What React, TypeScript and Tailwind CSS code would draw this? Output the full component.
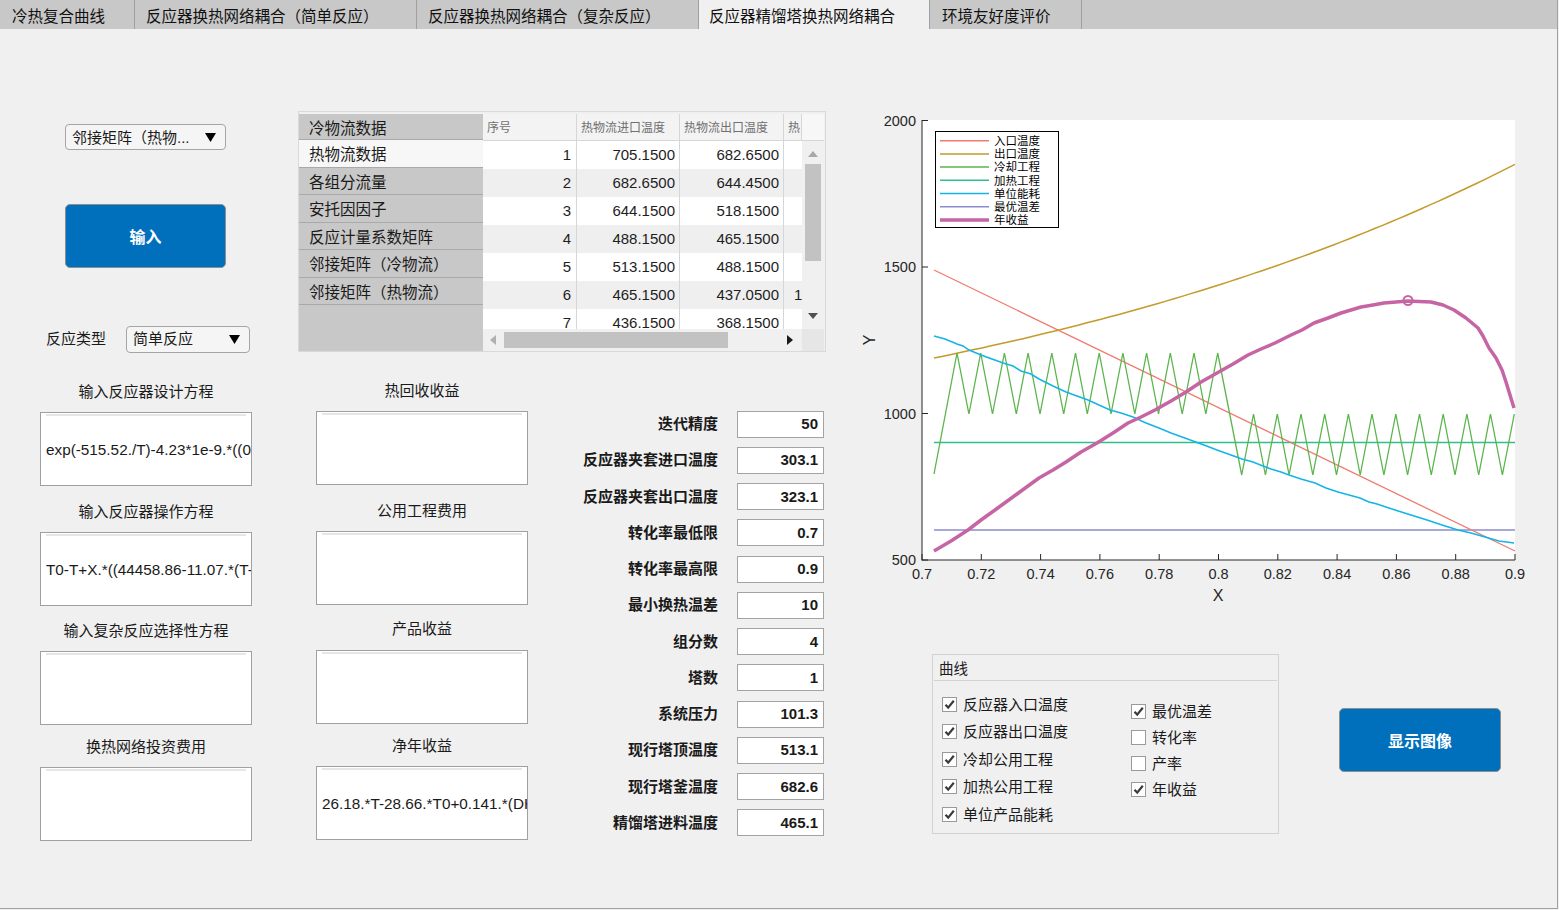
import React from "react";

type Pt = [number, number];
const toPath = (pts: Pt[]) =>
  pts.map((p, i) => `${i ? "L" : "M"}${p[0].toFixed(1)} ${p[1].toFixed(1)}`).join(" ");

function TriDown({ color = "#000" }: { color?: string }) {
  return (
    <svg width="11" height="9" viewBox="0 0 11 9">
      <path d="M0 0 L11 0 L5.5 9 Z" fill={color} />
    </svg>
  );
}

function SmallTri({ dir, color }: { dir: "up" | "down" | "left" | "right"; color: string }) {
  const d =
    dir === "up"
      ? "M0 6 L10 6 L5 0 Z"
      : dir === "down"
      ? "M0 0 L10 0 L5 6 Z"
      : dir === "left"
      ? "M6 0 L6 10 L0 5 Z"
      : "M0 0 L0 10 L6 5 Z";
  const vertical = dir === "up" || dir === "down";
  return (
    <svg width={vertical ? 10 : 6} height={vertical ? 6 : 10} viewBox={vertical ? "0 0 10 6" : "0 0 6 10"}>
      <path d={d} fill={color} />
    </svg>
  );
}

const tabs = [
  { label: "冷热复合曲线", cls: "w-[135px] pl-[12px]" },
  { label: "反应器换热网络耦合（简单反应）", cls: "w-[282px] pl-[11px]" },
  { label: "反应器换热网络耦合（复杂反应）", cls: "w-[282px] pl-[11px]" },
  { label: "反应器精馏塔换热网络耦合", cls: "w-[231px] pl-[10px] bg-[#f0f0f0]" },
  { label: "环境友好度评价", cls: "w-[152px] pl-[12px]" },
];

function Tabs() {
  return (
    <div className="h-[29px] bg-[#c8c8c8] flex shrink-0">
      {tabs.map((t) => (
        <div
          key={t.label}
          className={`h-full border-r border-[#a0a0a0] flex items-center pt-[4px] text-[15.5px] leading-[20px] text-[#111] whitespace-nowrap ${t.cls}`}
        >
          {t.label}
        </div>
      ))}
    </div>
  );
}

function TextBox({ text, cls }: { text?: string; cls: string }) {
  return (
    <div className={`h-[74px] w-[212px] bg-white border border-[#a0a0a0] flex flex-col ${cls}`}>
      <div className="mx-[5px] mt-[1px] h-[2px] bg-[#e6e6e6]" />
      <div className="flex-1 flex items-center pl-[5px] pr-[2px] overflow-hidden whitespace-nowrap text-[15.3px] leading-[20px] text-[#1a1a1a]">
        {text}
      </div>
    </div>
  );
}

function Label({ text, cls }: { text: string; cls: string }) {
  return (
    <div className={`w-[212px] h-[20px] text-center text-[15px] leading-[20px] text-[#1a1a1a] whitespace-nowrap ${cls}`}>
      {text}
    </div>
  );
}

function BlueButton({ text, cls }: { text: string; cls: string }) {
  return (
    <div
      className={`h-[64px] rounded-[5px] border border-[#8e8e8e] bg-[#0070bd] flex items-center justify-center pt-[3px] text-white font-bold text-[16px] leading-[20px] ${cls}`}
    >
      {text}
    </div>
  );
}

function ColumnA() {
  return (
    <div className="ml-[40px] w-[213px] flex flex-col">
      <div className="ml-[25px] mt-[95px] w-[161px] h-[26px] rounded-[4px] border border-[#a5a5a5] bg-[#f5f5f5] flex items-center justify-between pl-[6px] pr-[9px]">
        <span className="text-[15px] leading-[20px] text-[#1a1a1a] whitespace-nowrap pt-[1px]">邻接矩阵（热物...</span>
        <TriDown />
      </div>
      <BlueButton text="输入" cls="ml-[25px] mt-[54px] w-[161px]" />
      <div className="mt-[57.5px] h-[27px] flex items-center">
        <span className="ml-[6px] w-[80px] text-[15px] leading-[20px]">反应类型</span>
        <div className="w-[124px] h-[27px] rounded-[4px] border border-[#a5a5a5] bg-[#f5f5f5] flex items-center justify-between pl-[6px] pr-[9px]">
          <span className="text-[15px] leading-[20px] text-[#1a1a1a]">简单反应</span>
          <TriDown />
        </div>
      </div>
      <Label text="输入反应器设计方程" cls="mt-[29px]" />
      <TextBox text="exp(-515.52./T)-4.23*1e-9.*((0.66*T.^2-8.76*T" cls="mt-[10px]" />
      <Label text="输入反应器操作方程" cls="mt-[16px]" />
      <TextBox text="T0-T+X.*((44458.86-11.07.*(T-298.15)" cls="mt-[10px]" />
      <Label text="输入复杂反应选择性方程" cls="mt-[15px]" />
      <TextBox cls="mt-[10px]" />
      <Label text="换热网络投资费用" cls="mt-[12px]" />
      <TextBox cls="mt-[10px]" />
    </div>
  );
}

const listItems = ["冷物流数据", "热物流数据", "各组分流量", "安托因因子", "反应计量系数矩阵", "邻接矩阵（冷物流）", "邻接矩阵（热物流）"];

const rows: string[][] = [
  ["1", "705.1500", "682.6500", ""],
  ["2", "682.6500", "644.4500", ""],
  ["3", "644.1500", "518.1500", ""],
  ["4", "488.1500", "465.1500", ""],
  ["5", "513.1500", "488.1500", ""],
  ["6", "465.1500", "437.0500", "1"],
  ["7", "436.1500", "368.1500", ""],
];

function DataTable() {
  return (
    <div className="mt-[82px] w-[528px] h-[241px] border border-[#d9d9d9] pt-[2px] flex">
      <div className="w-[184px] h-full bg-[#c8c8c8] flex flex-col">
        {listItems.map((t, i) => (
          <div
            key={t}
            className={`${i === 0 ? "h-[26px]" : "h-[27.5px]"} ${i === 1 ? "bg-[#f7f7f7]" : ""} border-b border-[#a9a9a9] pl-[10px] pt-[4px] flex items-center text-[15.5px] leading-[20px] text-[#1a1a1a] whitespace-nowrap`}
          >
            {t}
          </div>
        ))}
      </div>
      <div className="w-[341px] h-full flex flex-col bg-white">
        <div className="h-[27px] flex bg-[#f3f3f3] border-b border-[#d6d6d6] text-[12px] leading-[16px] text-[#707070]">
          <div className="w-[94px] border-r border-[#d6d6d6] pl-[4px] pt-[2px] flex items-center">序号</div>
          <div className="w-[103px] border-r border-[#d6d6d6] pl-[4px] pt-[2px] flex items-center whitespace-nowrap">热物流进口温度</div>
          <div className="w-[104px] border-r border-[#d6d6d6] pl-[4px] pt-[2px] flex items-center whitespace-nowrap">热物流出口温度</div>
          <div className="w-[18px] border-r border-[#d6d6d6] pl-[4px] pt-[2px] flex items-center overflow-hidden whitespace-nowrap">热</div>
          <div className="w-[22px] bg-[#f7f7f7]" />
        </div>
        <div className="h-[188px] flex">
          <div className="w-[319px] h-full overflow-hidden flex flex-col">
            {rows.map((r, i) => (
              <div
                key={r[0]}
                className={`h-[28px] shrink-0 flex text-[15px] leading-[20px] text-[#1e1e1e] ${i % 2 === 1 ? "bg-[#efefef]" : "bg-white"}`}
              >
                <div className="w-[94px] border-r border-[#d6d6d6] pr-[5px] flex items-center justify-end">{r[0]}</div>
                <div className="w-[103px] border-r border-[#d6d6d6] pr-[4px] flex items-center justify-end">{r[1]}</div>
                <div className="w-[104px] border-r border-[#d6d6d6] pr-[4px] flex items-center justify-end">{r[2]}</div>
                <div className="w-[18px] pl-[10px] flex items-center overflow-hidden">{r[3]}</div>
              </div>
            ))}
          </div>
          <div className="w-[22px] h-full bg-[#f0f0f0] flex flex-col items-center">
            <div className="mt-[10px]">
              <SmallTri dir="up" color="#a8a8a8" />
            </div>
            <div className="mt-[7px] w-[16px] h-[97px] bg-[#c2c2c2]" />
            <div className="mt-auto mb-[10px]">
              <SmallTri dir="down" color="#505050" />
            </div>
          </div>
        </div>
        <div className="h-[22px] flex">
          <div className="w-[319px] h-full bg-[#f0f0f0] flex items-center">
            <div className="ml-[7px]">
              <SmallTri dir="left" color="#b0b0b0" />
            </div>
            <div className="ml-[8px] w-[224px] h-[16px] bg-[#c2c2c2]" />
            <div className="ml-auto mr-[9px]">
              <SmallTri dir="right" color="#1a1a1a" />
            </div>
          </div>
          <div className="w-[22px] h-full bg-[#e6e6e6]" />
        </div>
      </div>
    </div>
  );
}

const params: string[][] = [
  ["迭代精度", "50"],
  ["反应器夹套进口温度", "303.1"],
  ["反应器夹套出口温度", "323.1"],
  ["转化率最低限", "0.7"],
  ["转化率最高限", "0.9"],
  ["最小换热温差", "10"],
  ["组分数", "4"],
  ["塔数", "1"],
  ["系统压力", "101.3"],
  ["现行塔顶温度", "513.1"],
  ["现行塔釜温度", "682.6"],
  ["精馏塔进料温度", "465.1"],
];

function ColumnB() {
  return (
    <div className="ml-[45px] w-[528px] flex flex-col">
      <DataTable />
      <div className="flex">
        <div className="ml-[18px] w-[213px] flex flex-col">
          <Label text="热回收收益" cls="mt-[28.7px]" />
          <TextBox cls="mt-[10px]" />
          <Label text="公用工程费用" cls="mt-[16px]" />
          <TextBox cls="mt-[10px]" />
          <Label text="产品收益" cls="mt-[14px]" />
          <TextBox cls="mt-[11px]" />
          <Label text="净年收益" cls="mt-[12.3px]" />
          <TextBox text="26.18.*T-28.66.*T0+0.141.*(DH-14.3)" cls="mt-[9.7px]" />
        </div>
        <div className="ml-auto mr-[2px] mt-[58.7px] flex flex-col gap-[9.25px]">
          {params.map((p) => (
            <div key={p[0]} className="h-[27px] flex items-center justify-end">
              <span className="text-[15px] leading-[20px] font-bold text-[#1a1a1a] whitespace-nowrap">{p[0]}</span>
              <div className="ml-[19px] w-[87px] h-[27px] bg-white border border-[#a3a3a3] flex items-center justify-end pr-[5px] text-[15px] leading-[20px] font-bold text-[#1a1a1a]">
                {p[1]}
              </div>
            </div>
          ))}
        </div>
      </div>
    </div>
  );
}

function Chart() {
  const X0 = 921;
  const X1 = 1514;
  const gold: Pt[] = [];
  for (let x = 933; x < 1514; x += 8) gold.push([x, 358 - 127.5 * (Math.exp(0.00159 * (x - 933)) - 1)]);
  gold.push([1514, 358 - 127.5 * (Math.exp(0.00159 * (1514 - 933)) - 1)]);

  const green: Pt[] = [
    [933, 474],
    [956, 353],
  ];
  const h = 11.85;
  for (let k = 1; k <= 22; k++) green.push([956 + k * h, k % 2 === 1 ? 414 : 353]);
  green.push([1240.7, 475]);
  for (let k = 1; k <= 23; k++) green.push([1240.7 + k * h, k % 2 === 1 ? 414 : 475]);

  const cyan: Pt[] = [
    [933, 336], [944, 339], [956, 344], [962, 346], [968, 350], [980, 355], [991, 359], [1002, 363], [1012, 366],
    [1020, 371], [1030, 374], [1038, 379], [1052, 386], [1065, 392], [1076, 396], [1087, 400], [1098, 405],
    [1109, 410], [1120, 413], [1132, 417], [1145, 423], [1158, 428], [1170, 433], [1181, 437], [1192, 441],
    [1203, 445], [1216, 450], [1230, 455], [1241, 459], [1252, 462], [1262, 466], [1270, 469], [1280, 472], [1288, 475],
    [1300, 479], [1314, 483], [1325, 488], [1337, 492], [1348, 495], [1359, 498], [1368, 502], [1376, 504],
    [1385, 507], [1394, 510], [1410, 515], [1426, 520], [1441, 525], [1457, 530], [1470, 533], [1484, 537],
    [1498, 541], [1513, 543],
  ];

  const mag: Pt[] = [
    [933, 551], [950, 541], [967, 530], [980, 520], [994, 510], [1005, 502], [1016, 494], [1027, 486], [1038, 478],
    [1052, 470], [1065, 462], [1080, 452], [1096, 443], [1112, 433], [1127, 423], [1140, 417], [1154, 410],
    [1170, 401], [1185, 392], [1200, 382], [1216, 373], [1232, 364], [1247, 355], [1260, 349], [1274, 343],
    [1290, 335], [1301, 330], [1313, 323], [1327, 318], [1340, 313], [1350, 310], [1360, 307], [1372, 305],
    [1383, 303], [1395, 302], [1407, 301], [1418, 301.5], [1430, 302], [1442, 305], [1453, 310], [1465, 318],
    [1477, 328], [1482, 336], [1488, 348], [1495, 358], [1501, 370], [1505, 382], [1509, 395], [1513, 408],
  ];

  const yTicks: [number, string][] = [
    [120.5, "2000"],
    [267, "1500"],
    [413.5, "1000"],
    [560, "500"],
  ];
  const xLabels = ["0.7", "0.72", "0.74", "0.76", "0.78", "0.8", "0.82", "0.84", "0.86", "0.88", "0.9"];
  const legend: [string, string, number][] = [
    ["入口温度", "#f07a6e", 1.5],
    ["出口温度", "#c39b2b", 1.5],
    ["冷却工程", "#5ab54b", 1.5],
    ["加热工程", "#2fbf8e", 1.5],
    ["单位能耗", "#14b4e6", 1.5],
    ["最优温差", "#8c8ccc", 1.5],
    ["年收益", "#c565a4", 3.5],
  ];
  const numFont = "Liberation Sans, Arial, sans-serif";
  const cjkFont = "Noto Sans CJK SC, sans-serif";

  return (
    <svg width="685" height="505" viewBox="855 105 685 505" className="mt-[76px] block">
      <rect x={X0} y={120} width={X1 - X0} height={440} fill="#ffffff" />
      <line x1={933} y1={442.5} x2={1514} y2={442.5} stroke="#2fbf8e" strokeWidth={1.6} />
      <line x1={933} y1={530} x2={1514} y2={530} stroke="#8c8ccc" strokeWidth={1.6} />
      <path d="M933 270 L1514 551" stroke="#f07a6e" strokeWidth={1.3} fill="none" />
      <path d={toPath(gold)} stroke="#c39b2b" strokeWidth={1.5} fill="none" />
      <path d={toPath(green)} stroke="#5ab54b" strokeWidth={1.3} fill="none" strokeLinejoin="miter" />
      <path d={toPath(cyan)} stroke="#14b4e6" strokeWidth={1.5} fill="none" />
      <path d={toPath(mag)} stroke="#c565a4" strokeWidth={3.5} fill="none" strokeLinejoin="round" />
      <circle cx={1407} cy={300.5} r={4.5} stroke="#c565a4" strokeWidth={2} fill="none" />

      <line x1={X0} y1={120} x2={X0} y2={560.5} stroke="#262626" strokeWidth={1} />
      <line x1={X0} y1={560} x2={X1} y2={560} stroke="#262626" strokeWidth={1} />
      {yTicks.map(([y, t]) => (
        <g key={t}>
          <line x1={X0} y1={y} x2={X0 + 6} y2={y} stroke="#262626" strokeWidth={1} />
          <text x={915} y={y + 5} textAnchor="end" fontSize={14.5} fill="#262626" fontFamily={numFont}>
            {t}
          </text>
        </g>
      ))}
      {xLabels.map((t, i) => {
        const x = X0 + i * ((X1 - X0) / 10);
        return (
          <g key={t}>
            <line x1={x} y1={560} x2={x} y2={554} stroke="#262626" strokeWidth={1} />
            <text x={x} y={579} textAnchor="middle" fontSize={14.5} fill="#262626" fontFamily={numFont}>
              {t}
            </text>
          </g>
        );
      })}
      <text x={1217} y={601} textAnchor="middle" fontSize={16} fill="#262626" fontFamily={numFont}>
        X
      </text>
      <text
        x={868}
        y={346}
        textAnchor="middle"
        fontSize={16}
        fill="#262626"
        fontFamily={numFont}
        transform="rotate(-90 868 340)"
      >
        Y
      </text>

      <rect x={934.5} y={131.5} width={123} height={96} fill="#ffffff" stroke="#000000" strokeWidth={1} />
      {legend.map(([t, c, w], i) => {
        const y = 140.7 + i * 13.2;
        return (
          <g key={t}>
            <line x1={939} y1={y} x2={988} y2={y} stroke={c} strokeWidth={w} />
            <text x={993} y={y + 4.2} fontSize={11.5} fill="#000" fontFamily={cjkFont}>
              {t}
            </text>
          </g>
        );
      })}
    </svg>
  );
}

function Check({ on }: { on: boolean }) {
  return (
    <div className="w-[15px] h-[15px] bg-white border border-[#9a9a9a] flex items-center justify-center shrink-0">
      {on && (
        <svg width="13" height="13" viewBox="0 0 13 13">
          <path d="M2.5 6.8 L5.2 9.6 L10.8 2.8" stroke="#3a3a3a" strokeWidth={2.2} fill="none" />
        </svg>
      )}
    </div>
  );
}

const leftChecks = ["反应器入口温度", "反应器出口温度", "冷却公用工程", "加热公用工程", "单位产品能耗"];
const rightChecks: [string, boolean][] = [
  ["最优温差", true],
  ["转化率", false],
  ["产率", false],
  ["年收益", true],
];

function ColumnC() {
  return (
    <div className="ml-[30px] w-[685px] flex flex-col">
      <Chart />
      <div className="flex items-start">
        <div className="ml-[76px] mt-[44px] w-[347px] h-[180px] border border-[#d2d2d2] flex flex-col">
          <div className="h-[26px] mx-[1px] border-b border-[#d2d2d2] pl-[5px] pt-[2px] flex items-center text-[14.5px] leading-[20px] text-[#1a1a1a]">
            曲线
          </div>
          <div className="flex">
            <div className="ml-[9px] mt-[9.5px] w-[189px] flex flex-col">
              {leftChecks.map((t) => (
                <div key={t} className="h-[27.5px] flex items-center">
                  <Check on={true} />
                  <span className="ml-[6px] pt-[1px] text-[15px] leading-[20px] text-[#1a1a1a] whitespace-nowrap">{t}</span>
                </div>
              ))}
            </div>
            <div className="mt-[17.5px] flex flex-col">
              {rightChecks.map(([t, on]) => (
                <div key={t} className="h-[26px] flex items-center">
                  <Check on={on} />
                  <span className="ml-[6px] pt-[1px] text-[15px] leading-[20px] text-[#1a1a1a] whitespace-nowrap">{t}</span>
                </div>
              ))}
            </div>
          </div>
        </div>
        <BlueButton text="显示图像" cls="ml-[60px] mt-[98px] w-[162px]" />
      </div>
    </div>
  );
}

export default function App() {
  return (
    <div className="w-[1559px] h-[910px] bg-[#f0f0f0] overflow-hidden font-['Liberation_Sans','Noto_Sans_CJK_SC',sans-serif] text-[#1a1a1a]">
      <div className="w-[1558px] h-[909px] border-r border-b border-[#a0a0a0] flex flex-col">
        <Tabs />
        <div className="flex items-start">
          <ColumnA />
          <ColumnB />
          <ColumnC />
        </div>
      </div>
    </div>
  );
}
